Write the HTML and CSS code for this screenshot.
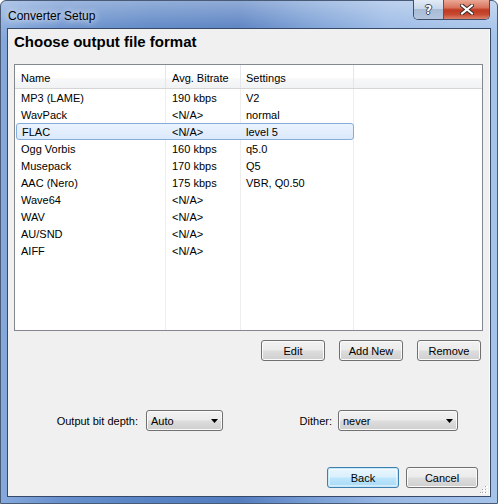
FILE: index.html
```html
<!DOCTYPE html>
<html>
<head>
<meta charset="utf-8">
<title>Converter Setup</title>
<link rel="stylesheet" href="styles.css">
</head>
<body>
<div class="window">
  <div class="titlebar">
    <span class="title">Converter Setup</span>
    <div class="caps">
      <div class="cap help"><span class="qmark">?</span></div>
      <div class="cap close">
        <svg width="14" height="11" viewBox="0 0 14 11">
          <path d="M2 1.5 L12 9.5 M12 1.5 L2 9.5" stroke="#3b2a2a" stroke-width="4" stroke-linecap="square" fill="none"/>
          <path d="M2 1.5 L12 9.5 M12 1.5 L2 9.5" stroke="#ffffff" stroke-width="2" stroke-linecap="square" fill="none"/>
        </svg>
      </div>
    </div>
  </div>
  <div class="client">
    <h1 class="heading">Choose output file format</h1>
    <div class="list">
      <div class="lhead">
        <div class="hc c1">Name</div>
        <div class="hc c2">Avg. Bitrate</div>
        <div class="hc c3">Settings</div>
        <div class="hc c4"></div>
      </div>
      <div class="lbody">
        <div class="row"><span class="c1">MP3 (LAME)</span><span class="c2">190 kbps</span><span class="c3">V2</span></div>
        <div class="row"><span class="c1">WavPack</span><span class="c2">&lt;N/A&gt;</span><span class="c3">normal</span></div>
        <div class="row sel"><span class="c1">FLAC</span><span class="c2">&lt;N/A&gt;</span><span class="c3">level 5</span></div>
        <div class="row"><span class="c1">Ogg Vorbis</span><span class="c2">160 kbps</span><span class="c3">q5.0</span></div>
        <div class="row"><span class="c1">Musepack</span><span class="c2">170 kbps</span><span class="c3">Q5</span></div>
        <div class="row"><span class="c1">AAC (Nero)</span><span class="c2">175 kbps</span><span class="c3">VBR, Q0.50</span></div>
        <div class="row"><span class="c1">Wave64</span><span class="c2">&lt;N/A&gt;</span><span class="c3"></span></div>
        <div class="row"><span class="c1">WAV</span><span class="c2">&lt;N/A&gt;</span><span class="c3"></span></div>
        <div class="row"><span class="c1">AU/SND</span><span class="c2">&lt;N/A&gt;</span><span class="c3"></span></div>
        <div class="row"><span class="c1">AIFF</span><span class="c2">&lt;N/A&gt;</span><span class="c3"></span></div>
      </div>
    </div>
    <div class="btnrow">
      <div class="btn">Edit</div>
      <div class="btn">Add New</div>
      <div class="btn">Remove</div>
    </div>
    <div class="comborow">
      <div class="lbl lbl1">Output bit depth:</div>
      <div class="combo combo1"><span class="ctext">Auto</span><svg class="arrow" width="7" height="4" viewBox="0 0 7 4"><path d="M0 0 H7 L3.5 4 Z" fill="#000"/></svg></div>
      <div class="lbl lbl2">Dither:</div>
      <div class="combo combo2"><span class="ctext">never</span><svg class="arrow" width="7" height="4" viewBox="0 0 7 4"><path d="M0 0 H7 L3.5 4 Z" fill="#000"/></svg></div>
    </div>
    <div class="bottomrow">
      <div class="btn wide default">Back</div>
      <div class="btn wide">Cancel</div>
    </div>
    <svg class="grip" width="8" height="8" viewBox="0 0 8 8">
      <rect x="6" y="0" width="2" height="2" fill="#fff"/><rect x="5" y="0" width="1" height="1" fill="#a0a0a0"/>
      <rect x="6" y="3" width="2" height="2" fill="#fff"/><rect x="5" y="3" width="1" height="1" fill="#a0a0a0"/>
      <rect x="3" y="3" width="2" height="2" fill="#fff"/><rect x="2" y="3" width="1" height="1" fill="#a0a0a0"/>
      <rect x="6" y="6" width="2" height="2" fill="#fff"/><rect x="5" y="6" width="1" height="1" fill="#a0a0a0"/>
      <rect x="3" y="6" width="2" height="2" fill="#fff"/><rect x="2" y="6" width="1" height="1" fill="#a0a0a0"/>
      <rect x="0" y="6" width="2" height="2" fill="#fff"/><rect x="0" y="6" width="1" height="1" fill="#a0a0a0"/>
    </svg>
  </div>
</div>
</body>
</html>
```

FILE: styles.css
```css
html, body {
  margin: 0;
  padding: 0;
  background: #ffffff;
}

.window {
  width: 498px;
  height: 504px;
  box-sizing: border-box;
  border: 1px solid #4a5b78;
  border-radius: 6px 6px 0 0;
  padding: 0 6px 6px 6px;
  display: flex;
  flex-direction: column;
  background:
    linear-gradient(180deg, rgba(255,255,255,0.35) 0px, rgba(255,255,255,0.08) 26px, rgba(255,255,255,0) 40px),
    linear-gradient(90deg, #86a9dc 0%, #6890cd 12%, #5883c4 30%, #547dc0 48%, #769cd4 62%, #98b8e4 78%, #a6c3ea 100%);
  font-family: "Liberation Sans", Arial, sans-serif;
  font-size: 11px;
  color: #000;
}

.titlebar {
  height: 27px;
  flex: none;
  display: flex;
  align-items: flex-start;
  justify-content: space-between;
}

.title {
  margin-top: 8px;
  margin-left: 1px;
  font-size: 12px;
  line-height: 14px;
  color: #000;
  text-shadow: 0 0 6px rgba(255,255,255,0.9), 0 0 10px rgba(255,255,255,0.6);
}

.caps {
  display: flex;
  margin-top: -1px;
  margin-right: 1px;
  height: 20px;
  border: 1px solid #3f4f6b;
  border-top: none;
  border-radius: 0 0 5px 5px;
  overflow: hidden;
  box-sizing: border-box;
}

.cap {
  height: 100%;
  display: flex;
  align-items: center;
  justify-content: center;
}

.help {
  width: 29px;
  border-right: 1px solid #4b5b76;
  background: linear-gradient(180deg, #e3ebf6 0%, #c9d7ea 45%, #a9bcd6 50%, #b4c6de 100%);
}

.qmark {
  font-family: "DejaVu Sans", sans-serif;
  font-weight: bold;
  font-size: 12px;
  line-height: 12px;
  color: #fff;
  text-shadow: -1px 0 #36455e, 1px 0 #36455e, 0 -1px #36455e, 0 1px #36455e;
}

.close {
  width: 45px;
  background: linear-gradient(180deg, #eaa896 0%, #d9745e 40%, #c03a22 52%, #c6482f 75%, #dc826a 100%);
}

.client {
  position: relative;
  height: 469px;
  flex: none;
  box-sizing: border-box;
  border: 1px solid #364969;
  background: #f0f0f0;
  display: flex;
  flex-direction: column;
  box-shadow: inset -1px 0 0 #fbfbfb;
}

.heading {
  margin: 4px 0 0 6px;
  font-size: 15px;
  line-height: 18px;
  font-weight: bold;
  flex: none;
}

.list {
  margin: 13px 7px 0 6px;
  height: 267px;
  flex: none;
  box-sizing: border-box;
  border: 1px solid #828790;
  background: #fff;
  display: flex;
  flex-direction: column;
}

.lhead {
  height: 24px;
  flex: none;
  box-sizing: border-box;
  border-bottom: 1px solid #d5d5d5;
  display: grid;
  grid-template-columns: 151px 75px 113px 1fr;
  background: linear-gradient(180deg, #ffffff 0%, #ffffff 55%, #f7f8f9 60%, #f1f2f4 100%);
}

.hc {
  padding-top: 4px;
  line-height: 19px;
  box-sizing: border-box;
  border-right: 1px solid #e3e6ea;
  white-space: nowrap;
}

.hc.c4 {
  border-right: none;
}

.hc.c1 { padding-left: 6px; }
.hc.c2 { padding-left: 6px; }
.hc.c3 { padding-left: 5px; }

.lbody {
  flex: 1;
  background:
    linear-gradient(#eeeeee, #eeeeee) 150px 0 / 1px 100% no-repeat,
    linear-gradient(#eeeeee, #eeeeee) 225px 0 / 1px 100% no-repeat,
    linear-gradient(#eeeeee, #eeeeee) 338px 0 / 1px 100% no-repeat,
    #ffffff;
}

.row {
  width: 339px;
  height: 17px;
  line-height: 19px;
  display: grid;
  grid-template-columns: 151px 75px 113px;
  white-space: nowrap;
}

.row .c1 { padding-left: 6px; }
.row .c2 { padding-left: 6px; }
.row .c3 { padding-left: 5px; }

.row.sel {
  margin-left: 1px;
  width: 338px;
  box-sizing: border-box;
  border: 1px solid #84acdd;
  border-radius: 3px;
  line-height: 17px;
  grid-template-columns: 149px 75px 112px;
  background: linear-gradient(180deg, #ebf3fd 0%, #dbe9fb 100%);
}

.row.sel .c1 { padding-left: 5px; }

.btnrow {
  margin: 9px 9px 0 0;
  display: flex;
  justify-content: flex-end;
  gap: 14px;
}

.btn {
  width: 64px;
  height: 21px;
  box-sizing: border-box;
  border: 1px solid #707070;
  border-radius: 3px;
  background: linear-gradient(180deg, #f2f2f2 0%, #ebebeb 48%, #dddddd 52%, #cfcfcf 100%);
  box-shadow: inset 0 0 0 1px #fbfbfb;
  text-align: center;
  line-height: 21px;
  white-space: nowrap;
}

.comborow {
  margin-top: 49px;
  display: flex;
  align-items: center;
  height: 21px;
}

.lbl {
  text-align: right;
  white-space: nowrap;
  line-height: 23px;
  height: 21px;
}

.lbl1 {
  width: 130px;
  margin-right: 8px;
}

.lbl2 {
  width: 109px;
  margin-right: 6px;
}

.combo {
  height: 21px;
  box-sizing: border-box;
  border: 1px solid #707070;
  border-radius: 3px;
  background: linear-gradient(180deg, #f2f2f2 0%, #ebebeb 48%, #dddddd 52%, #cfcfcf 100%);
  box-shadow: inset 0 0 0 1px #fbfbfb;
  display: flex;
  align-items: center;
  justify-content: space-between;
  padding: 0 4px 0 4px;
}

.ctext {
  line-height: 21px;
  height: 19px;
}

.combo1 { width: 77px; }
.combo2 { width: 120px; }

.arrow {
  display: block;
  margin-top: 1px;
}

.bottomrow {
  margin: 36px 12px 0 0;
  display: flex;
  justify-content: flex-end;
  gap: 7px;
}

.btn.wide {
  width: 72px;
}

.btn.default {
  border-color: #3c7fb1;
  background: linear-gradient(180deg, #eaf6fd 0%, #d9f0fc 48%, #bee6fd 52%, #a7d9f5 100%);
  box-shadow: inset 0 0 0 1px #c7e6f8, inset 0 0 0 2px rgba(255,255,255,0.5);
}

.grip {
  position: absolute;
  right: 2px;
  bottom: 2px;
}
```
